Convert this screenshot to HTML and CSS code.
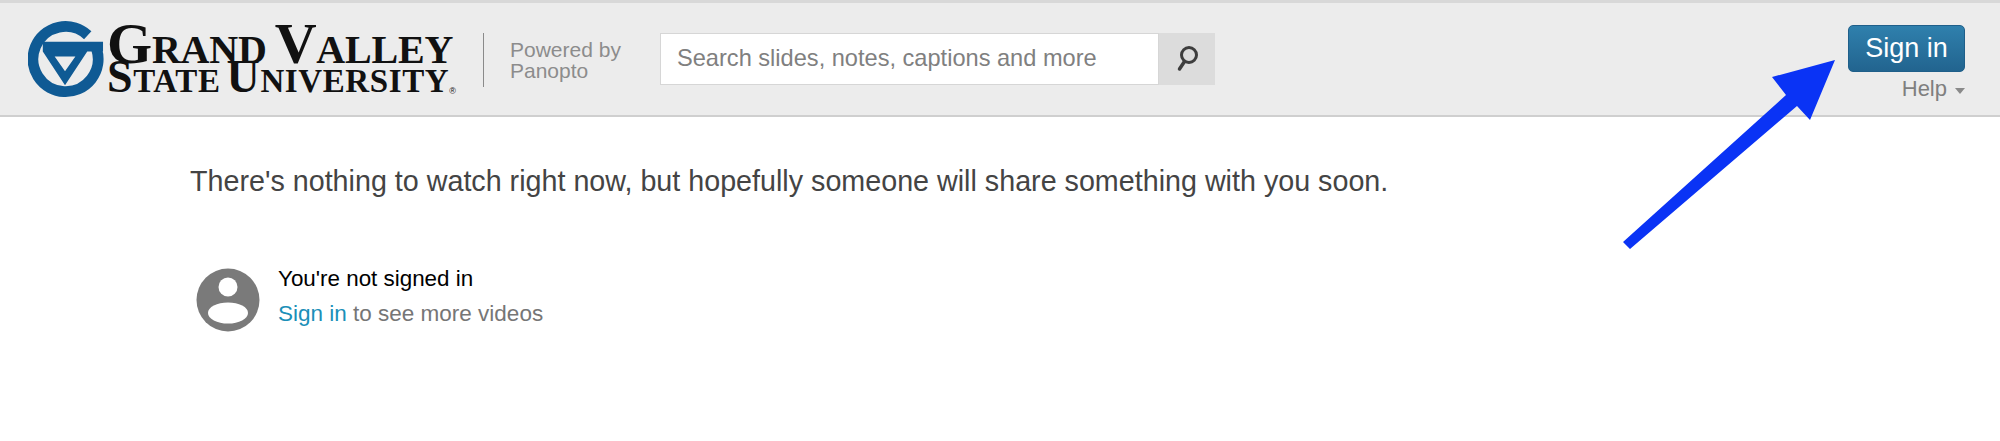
FILE: index.html
```html
<!DOCTYPE html>
<html lang="en">
<head>
<meta charset="utf-8">
<title>Grand Valley State University - Panopto</title>
<link rel="stylesheet" href="styles.css">
</head>
<body>
<header class="topbar">
  <div class="brand">
    <svg class="crest" viewBox="0 0 78 78" aria-hidden="true">
      <path class="crest-ring" d="M60.500 14.400A33 33 0 1 0 69.600 28.900"/>
      <path class="crest-v" fill-rule="evenodd" d="M15 21H76V31H60L37.500 65L15 31ZM27 36L37.500 51L48 36Z"/>
    </svg>
    <div class="wordmark">
      <div class="wm-line wm-top"><span class="wm-big">G</span>RAND<span class="wm-big wm-gap">V</span>ALLEY</div>
      <div class="wm-line wm-bottom"><span class="wm-big">S</span>TATE<span class="wm-big wm-gap-small">U</span>NIVERSITY<sup class="wm-reg">®</sup></div>
    </div>
  </div>
  <div class="divider"></div>
  <div class="powered">Powered by<br>Panopto</div>
  <form class="search">
    <div class="search-field">Search slides, notes, captions and more</div>
    <div class="search-btn">
      <svg viewBox="0 0 26 30" width="26" height="30" aria-hidden="true">
        <circle cx="15" cy="11" r="7.500" fill="none" stroke="#3d3d3d" stroke-width="3"/>
        <path d="M10.500 17.500L5.500 25" stroke="#3d3d3d" stroke-width="3.500" stroke-linecap="round"/>
      </svg>
    </div>
  </form>
  <div class="account">
    <button class="signin" type="button">Sign in</button>
    <div class="help">Help<span class="caret"></span></div>
  </div>
</header>
<main class="content">
  <p class="empty">There's nothing to watch right now, but hopefully someone will share something with you soon.</p>
  <div class="notice">
    <svg class="avatar" viewBox="0 0 64 64" aria-hidden="true">
      <circle cx="32" cy="32" r="31.500" fill="#7a7a7a"/>
      <circle cx="32" cy="19" r="9.500" fill="#fff"/>
      <ellipse cx="32" cy="45" rx="20" ry="10.500" fill="#fff"/>
    </svg>
    <div class="notice-text">
      <div class="notice-title">You're not signed in</div>
      <div class="notice-sub"><a class="link" href="#">Sign in</a> to see more videos</div>
    </div>
  </div>
</main>
<svg class="arrow" viewBox="0 0 240 200" aria-hidden="true">
  <path class="arrow-shape" d="M215 5L152 22L166 40L3 187L10 194L177 51L190 65Z"/>
</svg>
</body>
</html>
```
FILE: styles.css
```css
* {
  box-sizing: border-box;
}

html,
body {
  margin: 0;
  height: 441px;
  overflow: hidden;
  background: #fff;
}

body {
  position: relative;
  font-family: "Liberation Sans", Arial, sans-serif;
}

.topbar {
  display: flex;
  align-items: flex-start;
  height: 117px;
  background: #ececec;
  border-top: 3px solid #d8d8d8;
  border-bottom: 2px solid #cfcfcf;
}

.brand {
  display: flex;
  flex: none;
  width: 483px;
  height: 112px;
  padding: 18px 0 0 28px;
}

.crest {
  flex: none;
  width: 77px;
  height: 77px;
}

.crest-ring {
  fill: none;
  stroke: #0f5a94;
  stroke-width: 11;
}

.crest-v {
  fill: #0f5a94;
}

.wordmark {
  margin-left: 2px;
  font-family: "Liberation Serif", "Times New Roman", serif;
  font-weight: 700;
  color: #111;
  white-space: nowrap;
}

.wm-line {
  display: block;
}

.wm-top {
  height: 41px;
  font-size: 40px;
  line-height: 45px;
  letter-spacing: -0.2px;
}

.wm-bottom {
  height: 32px;
  font-size: 33px;
  line-height: 30px;
  letter-spacing: 0.6px;
}

.wm-top .wm-big {
  font-size: 58px;
}

.wm-bottom .wm-big {
  font-size: 46px;
}

.wm-gap {
  margin-left: 8px;
}

.wm-gap-small {
  margin-left: 6px;
}

.wm-reg {
  font-family: "Liberation Sans", Arial, sans-serif;
  font-size: 9px;
  font-weight: 400;
  line-height: 0;
  letter-spacing: 0;
  vertical-align: -2px;
}

.divider {
  flex: none;
  width: 1px;
  height: 54px;
  margin-top: 30px;
  background: #8a8a8a;
}

.powered {
  flex: none;
  width: 150px;
  margin-top: 36px;
  padding-left: 26px;
  font-size: 21px;
  line-height: 21px;
  color: #8c8c8c;
}

.search {
  display: flex;
  flex: none;
  width: 555px;
  height: 52px;
  margin-top: 30px;
  margin-left: 26px;
}

.search-field {
  flex: 1;
  padding-left: 16px;
  border: 1px solid #d6d6d6;
  background: #fff;
  font-size: 23.600px;
  line-height: 48px;
  color: #808080;
}

.search-btn {
  display: flex;
  flex: none;
  align-items: center;
  justify-content: center;
  width: 56px;
  background: #dcdcdc;
}

.account {
  display: flex;
  flex-direction: column;
  align-items: flex-end;
  margin-left: auto;
  margin-right: 35px;
  padding-top: 22px;
}

.signin {
  width: 117px;
  height: 47px;
  padding: 0;
  border: 1px solid #1f5f8a;
  border-radius: 5px;
  background: linear-gradient(#2f80ad, #22648f);
  font-family: inherit;
  font-size: 27px;
  color: #fff;
}

.help {
  display: flex;
  align-items: center;
  margin-top: 2px;
  font-size: 22px;
  line-height: 30px;
  color: #7f7f7f;
}

.caret {
  width: 0;
  height: 0;
  margin: 4px 0 0 8px;
  border-top: 6px solid #8a8a8a;
  border-left: 5.500px solid transparent;
  border-right: 5.500px solid transparent;
}

.content {
  padding: 48px 0 0 190px;
}

.empty {
  margin: 0;
  font-size: 28.700px;
  line-height: 32px;
  color: #444;
}

.notice {
  display: flex;
  align-items: flex-start;
  margin: 71px 0 0 6px;
}

.avatar {
  flex: none;
  width: 64px;
  height: 64px;
}

.notice-text {
  margin: -4px 0 0 18px;
}

.notice-title {
  font-size: 22.400px;
  line-height: 30px;
  color: #000;
}

.notice-sub {
  margin-top: 5px;
  font-size: 22.500px;
  line-height: 30px;
  color: #767676;
}

.link {
  color: #1b8fb8;
  text-decoration: none;
}

.arrow {
  position: absolute;
  left: 1620px;
  top: 55px;
  width: 240px;
  height: 200px;
}

.arrow-shape {
  fill: #0a33f5;
}
```
